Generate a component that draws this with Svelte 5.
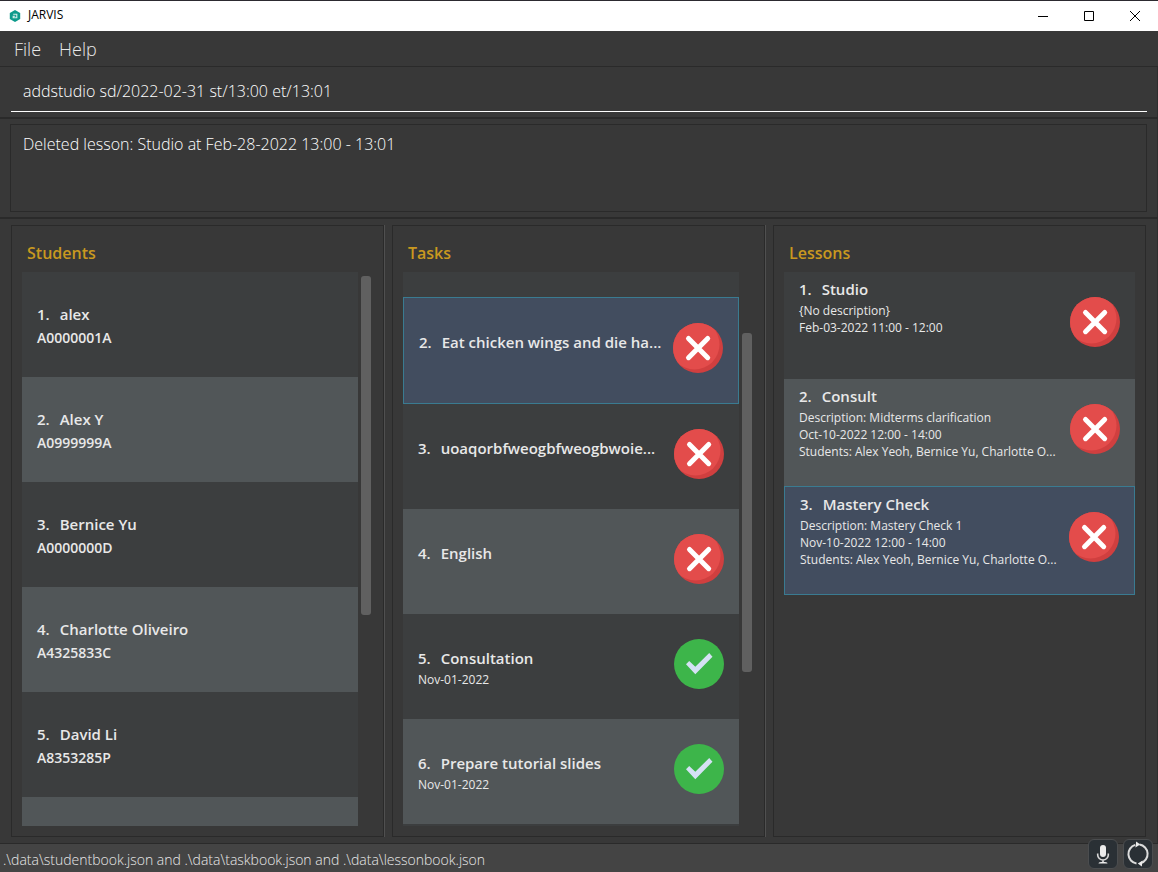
<script>
  let command = $state('addstudio sd/2022-02-31 st/13:00 et/13:01');
  let result = $state('Deleted lesson: Studio at Feb-28-2022 13:00 - 13:01');
  let taskList;

  const students = [
    { name: 'alex', id: 'A0000001A' },
    { name: 'Alex Y', id: 'A0999999A' },
    { name: 'Bernice Yu', id: 'A0000000D' },
    { name: 'Charlotte Oliveiro', id: 'A4325833C' },
    { name: 'David Li', id: 'A8353285P' },
    { name: '', id: '' }
  ];

  const tasks = [
    { name: '' },
    { name: 'Eat chicken wings and die ha...', done: false, selected: true },
    { name: 'uoaqorbfweogbfweogbwoie...', done: false },
    { name: 'English', done: false },
    { name: 'Consultation', date: 'Nov-01-2022', done: true },
    { name: 'Prepare tutorial slides', date: 'Nov-01-2022', done: true },
    { name: '' }
  ];

  const lessons = [
    { name: 'Studio', lines: ['{No description}', 'Feb-03-2022 11:00 - 12:00'] },
    {
      name: 'Consult',
      lines: [
        'Description: Midterms clarification',
        'Oct-10-2022 12:00 - 14:00',
        'Students: Alex Yeoh, Bernice Yu, Charlotte O...'
      ]
    },
    {
      name: 'Mastery Check',
      selected: true,
      lines: [
        'Description: Mastery Check 1',
        'Nov-10-2022 12:00 - 14:00',
        'Students: Alex Yeoh, Bernice Yu, Charlotte O...'
      ]
    }
  ];

  // The task list opens scrolled to the selected task.
  $effect(() => {
    taskList.scrollTop = 80;
  });
</script>

{#snippet cross()}
  <svg class="status" viewBox="0 0 50 50" role="img" aria-label="Not done">
    <clipPath id="disc"><circle cx="25" cy="25" r="25" /></clipPath>
    <circle cx="25" cy="25" r="25" fill="#d03f3f" />
    <circle cx="21.5" cy="21.5" r="25" fill="#e34c4b" clip-path="url(#disc)" />
    <path d="M15.5 15.5 34.7 34.7M34.7 15.5 15.5 34.7" stroke="#fff" stroke-width="5" stroke-linecap="round" />
  </svg>
{/snippet}

{#snippet tick()}
  <svg class="status" viewBox="0 0 50 50" role="img" aria-label="Done">
    <circle cx="25" cy="25" r="25" fill="#3db54a" />
    <path d="M12 25.3 15.2 22 21.3 27.8 35.2 14 38.5 17.7 21.3 35.3z" fill="#d5e1f4" />
  </svg>
{/snippet}

<div class="window">
  <header class="titlebar">
    <svg class="logo" viewBox="0 0 12 12" aria-hidden="true">
      <path d="M6 0 11.2 3v6L6 12 .8 9V3z" fill="#0c9a8b" />
      <path d="M4.2 4.2h3.6v3.6H4.2V6.3h2" fill="none" stroke="#d4efec" stroke-width="1.1" />
    </svg>
    <span class="app-name">JARVIS</span>
    <button class="win" aria-label="Minimize"><svg viewBox="0 0 10 10"><path d="M0 5.5h10" /></svg></button>
    <button class="win" aria-label="Maximize"><svg viewBox="0 0 10 10"><path d="M.5.5h9v9h-9z" /></svg></button>
    <button class="win" aria-label="Close"><svg viewBox="0 0 10 10"><path d="M0 0 10 10M10 0 0 10" /></svg></button>
  </header>

  <nav class="menu">
    <button>File</button>
    <button>Help</button>
  </nav>

  <div class="command">
    <input aria-label="Command" bind:value={command} spellcheck="false" />
  </div>

  <div class="result">
    <textarea aria-label="Result" readonly bind:value={result}></textarea>
  </div>

  <main>
    <section class="panel">
      <h2>Students</h2>
      <div class="scroller">
        <ul>
          {#each students as s, i}
            <li>
              <div class="text">
                {#if s.name}
                  <p class="name"><span>{i + 1}.</span>{s.name}</p>
                  <p class="id">{s.id}</p>
                {/if}
              </div>
            </li>
          {/each}
        </ul>
        <div class="track"><div class="thumb"></div></div>
      </div>
    </section>

    <section class="panel">
      <h2>Tasks</h2>
      <div class="scroller">
        <ul bind:this={taskList}>
          {#each tasks as t, i}
            <li class:selected={t.selected}>
              {#if t.name}
                <div class="text task">
                  <p class="name"><span>{i + 1}.</span>{t.name}</p>
                  {#if t.date}<p class="small">{t.date}</p>{/if}
                </div>
                {#if t.done}{@render tick()}{:else}{@render cross()}{/if}
              {/if}
            </li>
          {/each}
        </ul>
        <div class="track lower"><div class="thumb"></div></div>
      </div>
    </section>

    <section class="panel">
      <h2>Lessons</h2>
      <div class="scroller">
        <ul class="lessons">
          {#each lessons as l, i}
            <li class:selected={l.selected}>
              <div class="text">
                <p class="name"><span>{i + 1}.</span>{l.name}</p>
                {#each l.lines as line}<p class="small">{line}</p>{/each}
              </div>
              {@render cross()}
            </li>
          {/each}
        </ul>
      </div>
    </section>
  </main>

  <footer>
    <span>.\data\studentbook.json and .\data\taskbook.json and .\data\lessonbook.json</span>
    <div class="tools">
      <button aria-label="Voice input">
        <svg viewBox="0 0 28 28">
          <rect x="11" y="5" width="6" height="12" rx="3" fill="#ececec" />
          <path d="M8.7 13.5v1.5a5.3 5 0 0 0 10.6 0v-1.5M14 20v2.5" fill="none" stroke="#d8d8d8" stroke-width="1.6" />
          <path d="M9.5 23.5q0-1.7 4.5-1.7t4.5 1.7z" fill="#ececec" />
        </svg>
      </button>
      <button aria-label="Refresh">
        <svg viewBox="0 0 28 28">
          <path d="M12.5 23.4A9.5 9.5 0 0 1 11.2 4.9M15.5 4.6A9.5 9.5 0 0 1 16.8 23.1" fill="none" stroke="#dcdcdc" stroke-width="2" />
          <path d="M11.2 1.6 15.2 4.4 10.4 7.4zM16.8 26.4 12.8 23.6 17.6 20.6z" transform="translate(1 0)" fill="#ececec" />
        </svg>
      </button>
    </div>
  </footer>
</div>

<style>
  :global(body) {
    margin: 0;
    background: #383838;
  }

  .window {
    box-sizing: border-box;
    height: 100vh;
    min-height: 480px;
    display: flex;
    flex-direction: column;
    border-top: 1px solid #2c2a30;
    background: #383838;
    color: #e8e8e8;
    font-family: 'Open Sans', 'Noto Sans', sans-serif;
    overflow: hidden;
  }

  button {
    border: 0;
    padding: 0;
    background: none;
    color: inherit;
    font: inherit;
  }

  .titlebar {
    display: flex;
    align-items: center;
    height: 30px;
    flex: none;
    background: #fff;
    color: #000;
  }
  .logo {
    width: 12px;
    height: 12px;
    margin: 0 7px 0 9px;
  }
  .app-name {
    flex: 1;
    font-size: 12px;
    line-height: 16px;
    padding-bottom: 2px;
  }
  .win {
    display: flex;
    align-items: center;
    justify-content: center;
    width: 46px;
    height: 30px;
  }
  .win svg {
    width: 10px;
    height: 10px;
    fill: none;
    stroke: #000;
    stroke-width: 1;
  }

  .menu {
    display: flex;
    align-items: center;
    gap: 18px;
    height: 35px;
    flex: none;
    padding: 0 14px;
    border-bottom: 1px solid #2a2a2a;
    font-size: 18px;
    font-weight: 300;
  }

  .command,
  .result,
  main {
    box-shadow: inset -1px 0 #2e2e2e;
  }

  .command {
    flex: none;
    padding: 6px 11px 5px;
    border-bottom: 2px solid #2a2a2a;
  }
  input,
  textarea {
    display: block;
    box-sizing: border-box;
    width: 100%;
    border: 0;
    outline: 0;
    background: none;
    color: #fff;
    font: 300 16px/22px 'Open Sans', 'Noto Sans', sans-serif;
  }
  input {
    height: 39px;
    padding: 0 12px 2px;
    border-bottom: 1px solid #fff;
  }

  .result {
    flex: none;
    padding: 5px 11px 5px 10px;
    border-bottom: 2px solid #2a2a2a;
  }
  textarea {
    height: 88px;
    padding: 8px 12px;
    border: 1px solid #2a2a2a;
    resize: none;
  }

  main {
    flex: 1;
    min-height: 0;
    display: grid;
    grid-template-columns: repeat(3, minmax(0, 1fr));
    gap: 8px;
    padding: 6px 12px 6px 11px;
  }
  .panel {
    display: flex;
    flex-direction: column;
    min-height: 0;
    padding: 10px;
    border: 1px solid #2a2a2a;
    box-shadow: 1px 0 #505050;
  }
  .panel:last-child {
    box-shadow: none;
  }
  h2 {
    flex: none;
    margin: 0;
    padding: 0 5px 2px;
    color: #c9981f;
    font-size: 16px;
    font-weight: 600;
    line-height: 34px;
  }

  .scroller {
    flex: 1;
    min-height: 0;
    display: flex;
    gap: 3px;
  }
  ul {
    flex: 1;
    min-width: 0;
    margin: 0;
    padding: 0;
    overflow: hidden;
    list-style: none;
  }
  .track {
    width: 10px;
    margin-right: 2px;
    padding-top: 4px;
  }
  .track.lower {
    padding-top: 61px;
  }
  .thumb {
    height: 339px;
    border-radius: 3px;
    background: #606060;
  }

  li {
    display: flex;
    gap: 8px;
    height: 105px;
    padding: 0 15px;
    background: #3c3e3f;
  }
  li:nth-child(even) {
    background: #515658;
  }
  .lessons li {
    height: 107px;
  }
  li.selected,
  li.selected:nth-child(even) {
    border: 1px solid #3a7b91;
    background: #424d5f;
  }

  .text {
    flex: 1;
    min-width: 0;
    padding-top: 30px;
    white-space: nowrap;
  }
  .text.task {
    padding-top: 32px;
  }
  .lessons .text {
    padding-top: 5px;
  }
  p {
    margin: 0;
  }
  .name {
    margin-bottom: 1px;
    font-size: 15px;
    font-weight: 600;
    line-height: 24px;
  }
  .name span {
    margin-right: 10px;
  }
  .id {
    font-size: 14px;
    font-weight: 600;
    line-height: 22px;
  }
  .small {
    font-size: 12px;
    line-height: 17px;
  }
  .status {
    flex: none;
    width: 50px;
    height: 50px;
    margin-top: 25px;
  }

  footer {
    position: relative;
    display: flex;
    align-items: center;
    height: 29px;
    flex: none;
    padding: 2px 3px 0;
    box-sizing: border-box;
    border-top: 1px solid #2a2a2a;
    background: #444;
    font-size: 14px;
    font-weight: 300;
  }
  .tools {
    position: absolute;
    right: 5px;
    bottom: 3px;
    display: flex;
    gap: 5px;
  }
  .tools button {
    box-sizing: border-box;
    width: 30px;
    height: 30px;
    border: 1px solid #4b4d4f;
    border-radius: 6px;
    background: #2a3035;
  }
  .tools svg {
    display: block;
    width: 28px;
    height: 28px;
  }
</style>
